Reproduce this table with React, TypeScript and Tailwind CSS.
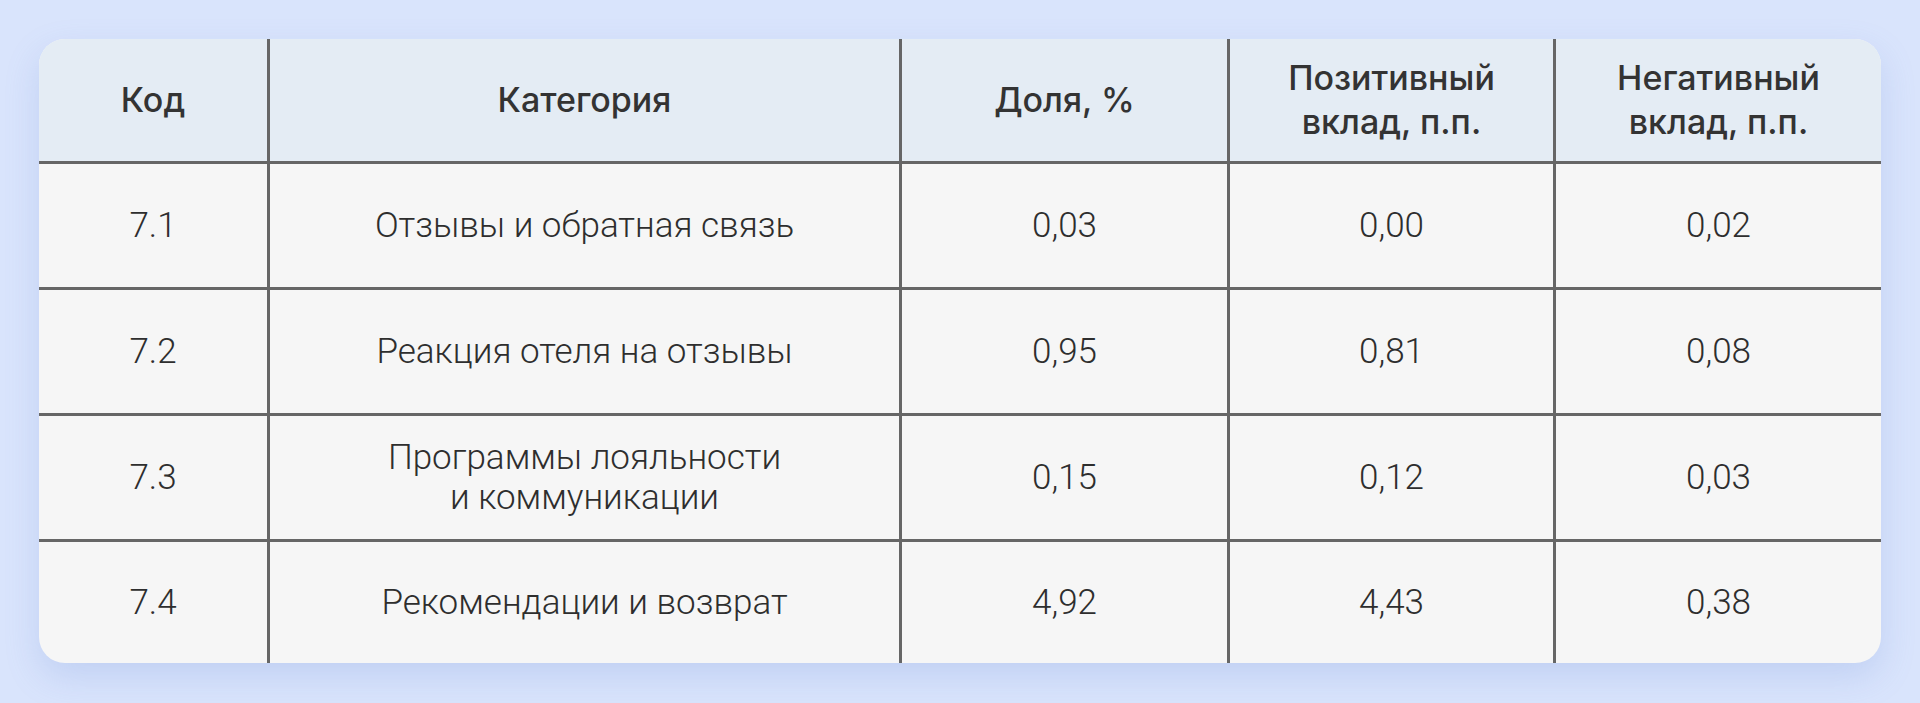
import React from 'react';

interface Row {
  code: string;
  category: React.ReactNode;
  share: string;
  positive: string;
  negative: string;
}

const headers: React.ReactNode[] = [
  'Код',
  'Категория',
  'Доля, %',
  <>Позитивный<br />вклад, п.п.</>,
  <>Негативный<br />вклад, п.п.</>,
];

const rows: Row[] = [
  { code: '7.1', category: 'Отзывы и обратная связь', share: '0,03', positive: '0,00', negative: '0,02' },
  { code: '7.2', category: 'Реакция отеля на отзывы', share: '0,95', positive: '0,81', negative: '0,08' },
  {
    code: '7.3',
    category: <>Программы лояльности<br />и коммуникации</>,
    share: '0,15',
    positive: '0,12',
    negative: '0,03',
  },
  { code: '7.4', category: 'Рекомендации и возврат', share: '4,92', positive: '4,43', negative: '0,38' },
];

const cols = 'grid grid-cols-[231px_632px_328px_326px_1fr]';

const HeaderCell: React.FC<{ children: React.ReactNode; last?: boolean }> = ({ children, last }) => (
  <div
    className={`flex items-center justify-center text-center border-b-[3px] border-[#666666] ${
      last ? '' : 'border-r-[3px]'
    }`}
  >
    <span className="font-['Inter',sans-serif] font-medium text-[34px] leading-[44px] text-[#333333]">
      {children}
    </span>
  </div>
);

const BodyCell: React.FC<{ children: React.ReactNode; last?: boolean; lastRow?: boolean }> = ({
  children,
  last,
  lastRow,
}) => (
  <div
    className={`flex items-center justify-center text-center border-[#666666] ${last ? '' : 'border-r-[3px]'} ${
      lastRow ? '' : 'border-b-[3px]'
    }`}
  >
    <span className="font-['Roboto',sans-serif] font-light text-[35px] leading-[40px] text-[#2e2e2e]">
      {children}
    </span>
  </div>
);

export default function App() {
  return (
    <div className="w-full h-[703px] bg-[#d9e4fc] p-[39px] box-border">
      <div className="w-full h-[624px] rounded-[26px] overflow-hidden bg-[#f6f6f6] shadow-[0_14px_34px_rgba(110,140,215,0.22)]">
        <div className={`${cols} h-[125px] bg-[#e4ecf4]`}>
          {headers.map((h, i) => (
            <HeaderCell key={i} last={i === headers.length - 1}>
              {h}
            </HeaderCell>
          ))}
        </div>
        {rows.map((r, idx) => {
          const lastRow = idx === rows.length - 1;
          const cells = [r.code, r.category, r.share, r.positive, r.negative];
          return (
            <div key={r.code} className={`${cols} ${lastRow ? 'h-[121px]' : 'h-[126px]'}`}>
              {cells.map((c, i) => (
                <BodyCell key={i} last={i === cells.length - 1} lastRow={lastRow}>
                  {c}
                </BodyCell>
              ))}
            </div>
          );
        })}
      </div>
    </div>
  );
}
